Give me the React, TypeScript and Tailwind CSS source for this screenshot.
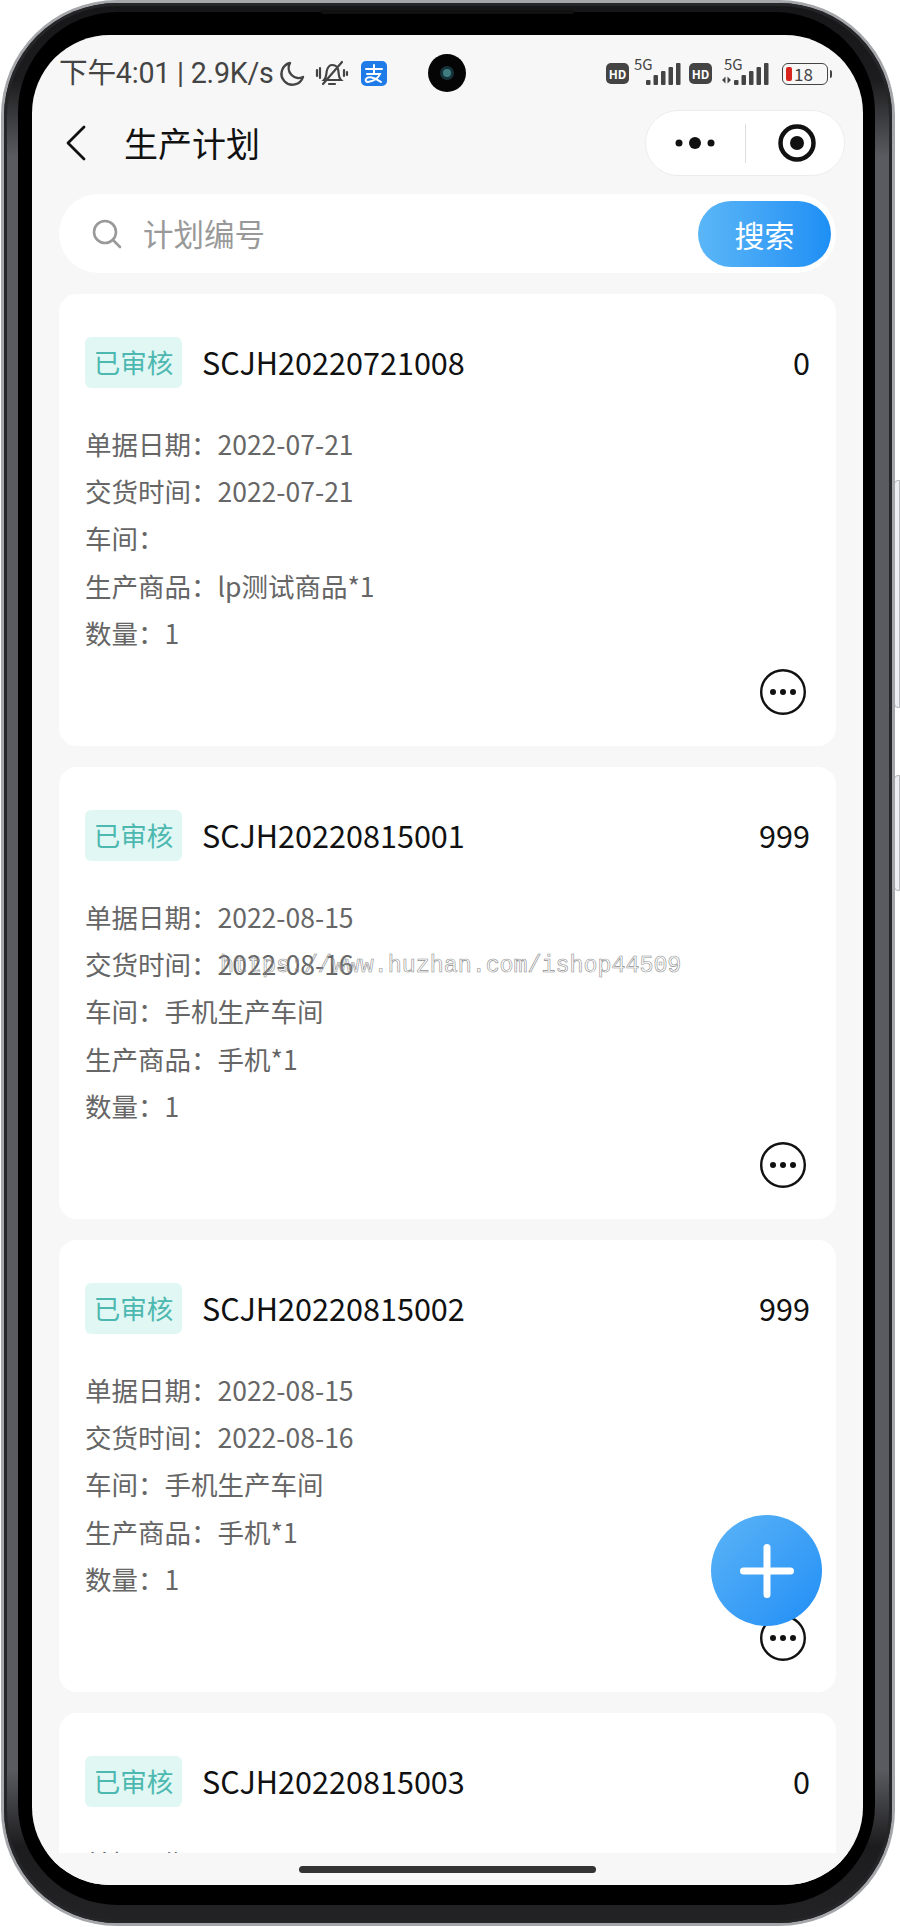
import React from 'react';

const FONT = '"Noto Sans CJK SC", "Noto Sans", sans-serif';

interface PlanCardProps {
  code: string;
  amount: string;
  billDate: string;
  deliveryDate: string;
  workshop: string;
  product: string;
}

const plans: PlanCardProps[] = [
  { code: 'SCJH20220721008', amount: '0', billDate: '2022-07-21', deliveryDate: '2022-07-21', workshop: '', product: 'lp测试商品*1' },
  { code: 'SCJH20220815001', amount: '999', billDate: '2022-08-15', deliveryDate: '2022-08-16', workshop: '手机生产车间', product: '手机*1' },
  { code: 'SCJH20220815002', amount: '999', billDate: '2022-08-15', deliveryDate: '2022-08-16', workshop: '手机生产车间', product: '手机*1' },
  { code: 'SCJH20220815003', amount: '0', billDate: '2022-08-16', deliveryDate: '2022-08-16', workshop: '手机生产车间', product: '手机*1' },
];

function Bars({ arrows }: { arrows?: boolean }) {
  return (
    <svg width="48" height="24" viewBox="0 0 48 24" fill="#444">
      {arrows && <path d="M0 18l3.5-3.5v7zM5.5 14.5L9 18l-3.5 3.5z" />}
      <rect x="12" y="18" width="4.5" height="5" rx="1" />
      <rect x="19.5" y="13" width="4.5" height="10" rx="1" />
      <rect x="27" y="9" width="4.5" height="14" rx="1" />
      <rect x="34.5" y="5" width="4.5" height="18" rx="1" />
      <rect x="42" y="1" width="4.5" height="22" rx="1" />
    </svg>
  );
}

function HdBadge() {
  return (
    <span className="flex h-[21px] w-[23px] items-center justify-center rounded-[5px] bg-[#444] text-[12px] font-bold leading-none text-white">
      HD
    </span>
  );
}

function StatusBar() {
  return (
    <div className="flex h-[75px] shrink-0 items-center justify-between pl-[27px] pr-[31px] pt-[2px] text-[#444]">
      <div className="flex items-center">
        <span className="text-[28.6px] leading-none tracking-[-0.2px]" style={{ fontFamily: 'Roboto, "Noto Sans CJK SC", sans-serif' }}>
          下午4:01 | 2.9K/s
        </span>
        <svg className="ml-[4px]" width="28" height="28" viewBox="0 0 28 28" fill="none" stroke="#444" strokeWidth="2.4">
          <path d="M12 3a11 11 0 1 0 13 14 10 10 0 0 1-13-14z" strokeLinejoin="round" />
        </svg>
        <svg className="ml-[9px]" width="34" height="30" viewBox="0 0 34 30" fill="none" stroke="#444" strokeWidth="2.2" strokeLinecap="round">
          <path d="M9 21c3-3 2-7 3-10s3-5 5-5 5 1 6 4 0 8 3 11zM14 25h6M2 11v6M5 9v10M29 11v6M32 13v3M8 25L27 3" />
        </svg>
        <svg className="ml-[12px]" width="26" height="25" viewBox="0 0 26 25">
          <rect width="26" height="25" rx="5" fill="#1f7be8" />
          <path d="M5 8h16M13 4v8M6 13h13c-2 5-6 7-12 8-2 0-3-2-2-3 2-3 8-2 15 3" fill="none" stroke="#fff" strokeWidth="2" strokeLinecap="round" />
        </svg>
      </div>
      <div className="flex items-center">
        <HdBadge />
        <div className="relative ml-[5px] h-[24px] w-[48px]">
          <span className="absolute left-0 top-[-6px] text-[15px] leading-none">5G</span>
          <Bars />
        </div>
        <div className="ml-[7px]">
          <HdBadge />
        </div>
        <div className="relative ml-[10px] h-[24px] w-[48px]">
          <span className="absolute left-[2px] top-[-6px] text-[15px] leading-none">5G</span>
          <Bars arrows />
        </div>
        <div className="ml-[12px] flex items-center">
          <div className="flex h-[22px] w-[46px] items-center rounded-[6px] border-[1.5px] border-[#444] pl-[3px]">
            <span className="h-[14px] w-[6px] rounded-[2px] bg-[#d9231d]" />
            <span className="ml-[2px] text-[17px] leading-none">18</span>
          </div>
          <span className="ml-[2px] h-[8px] w-[2px] rounded-r bg-[#444]" />
        </div>
      </div>
    </div>
  );
}

function NavBar() {
  return (
    <div className="flex h-[66px] shrink-0 items-center justify-between pl-[33px] pr-[18px]">
      <div className="flex items-center">
        <svg width="22" height="36" viewBox="0 0 22 36" fill="none" stroke="#111" strokeWidth="2.8" strokeLinecap="round" strokeLinejoin="round">
          <path d="M19 2L3 18l16 16" />
        </svg>
        <span className="ml-[37px] text-[34px] leading-none text-[#111]">生产计划</span>
      </div>
      <div className="flex h-[66px] w-[200px] items-center rounded-full border border-[#ececec] bg-white">
        <svg className="ml-[29px]" width="40" height="16" viewBox="0 0 40 16" fill="#111">
          <circle cx="4" cy="8" r="3.5" />
          <circle cx="20" cy="8" r="6" />
          <circle cx="36" cy="8" r="3.5" />
        </svg>
        <span className="ml-[30px] h-[39px] w-[1px] bg-[#dddddd]" />
        <svg className="ml-[32px]" width="38" height="38" viewBox="0 0 38 38">
          <circle cx="19" cy="19" r="16.5" fill="none" stroke="#111" strokeWidth="4.5" />
          <circle cx="19" cy="19" r="7" fill="#111" />
        </svg>
      </div>
    </div>
  );
}

function SearchBar() {
  return (
    <div className="mx-[27px] mt-[18px] flex h-[79px] shrink-0 items-center rounded-full bg-white pl-[33px] pr-[5px]">
      <svg width="30" height="30" viewBox="0 0 30 30" fill="none" stroke="#999" strokeWidth="2.6" strokeLinecap="round">
        <circle cx="13" cy="13" r="11" />
        <path d="M21 21l7 7" />
      </svg>
      <span className="ml-[21px] flex-1 text-[30.5px] leading-none text-[#999]">计划编号</span>
      <button className="h-[66px] w-[133px] rounded-full bg-gradient-to-r from-[#5ab6f6] to-[#1d8ff5] text-[30px] leading-none text-white">
        搜索
      </button>
    </div>
  );
}

function PlanCard({ code, amount, billDate, deliveryDate, workshop, product }: PlanCardProps) {
  return (
    <div className="h-[452px] shrink-0 rounded-[18px] bg-white px-[26px] pt-[43px]">
      <div className="flex h-[51px] items-center">
        <span className="flex h-[51px] w-[97px] items-center justify-center rounded-[6px] bg-[#e1f7f4] text-[26.5px] leading-none text-[#4db8b0]">
          已审核
        </span>
        <span className="ml-[20px] flex-1 text-[30.6px] leading-none text-[#111]">{code}</span>
        <span className="text-[30.6px] leading-none text-[#111]">{amount}</span>
      </div>
      <div className="mt-[32px] text-[26.5px] leading-[47.2px] text-[#666]">
        <div>单据日期：{billDate}</div>
        <div>交货时间：{deliveryDate}</div>
        <div>车间：{workshop}</div>
        <div>生产商品：{product}</div>
        <div>数量：1</div>
      </div>
      <div className="mt-[13px] flex justify-end pr-[4px]">
        <svg width="46" height="46" viewBox="0 0 46 46">
          <circle cx="23" cy="23" r="21.8" fill="none" stroke="#111" strokeWidth="2.4" />
          <circle cx="13" cy="23" r="3" fill="#111" />
          <circle cx="23" cy="23" r="3" fill="#111" />
          <circle cx="33" cy="23" r="3" fill="#111" />
        </svg>
      </div>
    </div>
  );
}

export default function App() {
  return (
    <div className="relative h-[1927px] w-[900px] overflow-hidden bg-white" style={{ fontFamily: FONT }}>
      {/* Side keys */}
      <div className="absolute right-0 top-[480px] h-[228px] w-[6px] rounded-l-[4px] border border-[#b5b7bc] bg-[#eceef1]" />
      <div className="absolute right-0 top-[775px] h-[116px] w-[6px] rounded-l-[4px] border border-[#b5b7bc] bg-[#eceef1]" />

      {/* Phone frame */}
      <div className="relative ml-[1px] h-[1926px] w-[894px] rounded-[116px] bg-[#a4a6aa] p-[3px]">
        <div className="h-full rounded-[113px] bg-[linear-gradient(180deg,#161618_0%,#1c1c1e_4%,#5a5b60_8%,#5a5b60_92%,#1c1c1e_96%,#232325_100%)] pb-[18px] pl-[14px] pr-[17px] pt-[9px] shadow-[inset_0_0_0_3px_#262628]">
          <div className="h-full rounded-[100px] bg-black pb-[20px] pl-[14px] pr-[12px] pt-[23px]">
            {/* Screen */}
            <div className="relative flex h-full flex-col overflow-hidden rounded-[78px] bg-[#f7f7f7]">
              <StatusBar />
              <NavBar />
              <SearchBar />
              <div className="mt-[21px] flex min-h-0 flex-1 flex-col gap-[21px] overflow-hidden px-[27px]">
                {plans.map((plan) => (
                  <PlanCard key={plan.code} {...plan} />
                ))}
              </div>
              <div className="flex h-[32px] shrink-0 justify-center bg-[#f7f7f7] pt-[13px]">
                <span className="h-[7px] w-[297px] rounded-full bg-[#333]" />
              </div>

              {/* Add button */}
              <button className="absolute left-[679px] top-[1480px] flex h-[111px] w-[111px] items-center justify-center rounded-full bg-gradient-to-br from-[#5ab4f6] to-[#1d8ef6]">
                <svg width="54" height="54" viewBox="0 0 54 54" stroke="#fff" strokeWidth="7" strokeLinecap="round">
                  <path d="M27 3.5v47M3.5 27h47" />
                </svg>
              </button>

              {/* Camera */}
              <div className="absolute left-[396px] top-[19px] flex h-[38px] w-[38px] items-center justify-center rounded-full bg-[#050505]">
                <span className="h-[14px] w-[14px] rounded-full border-[3px] border-[#16323a] bg-[#3f7d80]" />
              </div>
            </div>
          </div>
        </div>
        {/* Earpiece slit */}
        <div className="absolute left-[319px] top-[10px] h-[4px] w-[255px] rounded-b-[4px] bg-[#111]" />
      </div>

      {/* Watermark */}
      <div
        className="absolute left-[220px] top-[950px] whitespace-nowrap text-[23.3px] leading-[32px] text-transparent [-webkit-text-stroke:0.6px_#8f8f8f]"
        style={{ fontFamily: '"Liberation Mono", monospace' }}
      >
        https://www.huzhan.com/ishop44509
      </div>
    </div>
  );
}
